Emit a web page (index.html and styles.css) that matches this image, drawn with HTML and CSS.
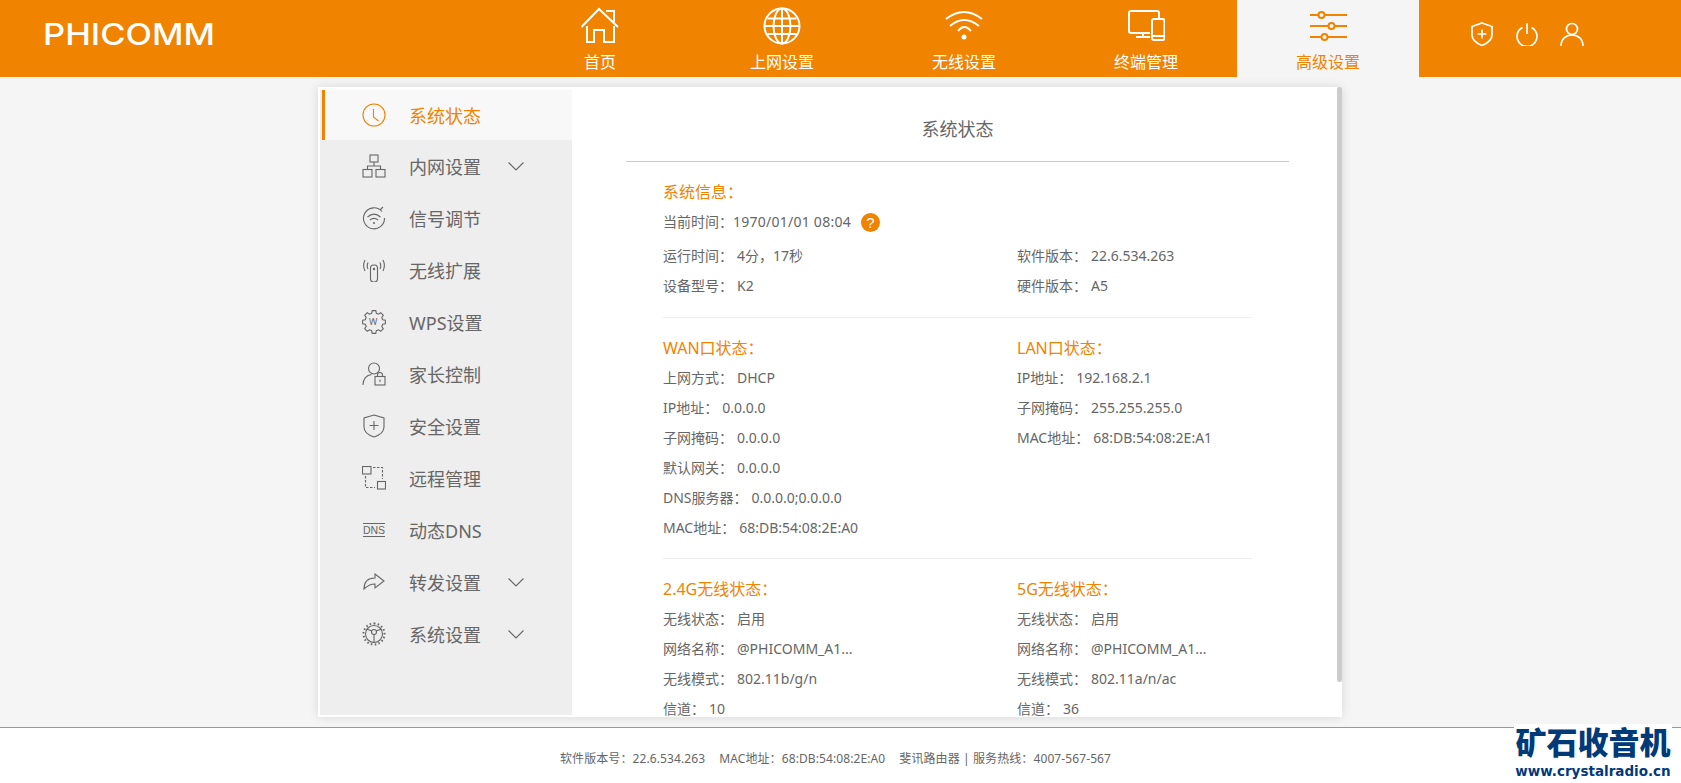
FILE: index.html
```html
<!DOCTYPE html>
<html lang="zh-CN">
<head>
    <meta charset="UTF-8">
    <title>PHICOMM</title>
    <link rel="stylesheet" href="styles.css">
</head>
<body>
    <!-- Cabecera -->
    <header class="top">
        <div class="logo"><span>PHICOMM</span></div>
        <nav class="nav">
            <a class="nav-item">
                <svg class="nav-icon" viewBox="0 0 38 38"><path d="M.5 20 18 2l19 18M33 15V4h-8M6 19v16h7V23h10v12h10V19"/></svg>
                <span>首页</span>
            </a>
            <a class="nav-item">
                <svg class="nav-icon" viewBox="0 0 38 38"><circle cx="19" cy="19" r="17.500"/><ellipse cx="19" cy="19" rx="8.500" ry="17.500"/><path d="M19 1.500v35M1.500 19h35M4.500 11.500h29M4.500 27h29"/></svg>
                <span>上网设置</span>
            </a>
            <a class="nav-item">
                <svg class="nav-icon" viewBox="0 0 38 38"><path d="M1 12Q19-2 37 12M5 19Q19 7 34 19M13 24Q19 16 26 24"/><circle class="dot" cx="19" cy="30" r="2.500"/></svg>
                <span>无线设置</span>
            </a>
            <a class="nav-item">
                <svg class="nav-icon" viewBox="0 0 38 38"><path d="M32 11V6a2 2 0 0 0-2-2H4a2 2 0 0 0-2 2v18a2 2 0 0 0 2 2h19M16 26v4M9 30h14"/><rect x="25" y="12" width="12.500" height="21" rx="2"/><path d="M25 29h12.500"/></svg>
                <span>终端管理</span>
            </a>
            <a class="nav-item active">
                <svg class="nav-icon" viewBox="0 0 38 38"><path d="M1 8h8M16 8h22M1 19h18M26 19h12M1 30h11M19 30h19"/><circle cx="12.500" cy="8" r="3"/><circle cx="22.500" cy="19" r="3"/><circle cx="15.500" cy="30" r="3"/></svg>
                <span>高级设置</span>
            </a>
        </nav>
        <div class="tools">
            <svg viewBox="0 0 24 24"><path d="M12 1 22 4.500V13c0 4-4 8-10 10.500C6 21 2 17 2 13V4.500zM12 7.500v9M7.500 12h9"/></svg>
            <svg viewBox="0 0 24 24"><path d="M7.500 5.500a10 10 0 1 0 9 0M12 1v11"/></svg>
            <svg viewBox="0 0 24 24"><circle cx="12" cy="7" r="5.500"/><path d="M1 24c0-7 5-11 11-11s11 4 11 11"/></svg>
        </div>
    </header>

    <main class="main">
        <div class="panel">
            <!-- Menu lateral -->
            <aside class="side">
                <a class="side-item active">
                    <svg viewBox="0 0 24 24"><circle cx="12" cy="12" r="11"/><path d="M11.500 6v8l5 4"/></svg>
                    <span>系统状态</span>
                </a>
                <a class="side-item">
                    <svg viewBox="0 0 24 24"><rect x="8" y="1" width="8" height="7"/><rect x="1" y="15.500" width="9" height="7.500"/><rect x="14" y="15.500" width="9" height="7.500"/><path d="M12 8v4M5.500 15.500V12h13v3.500"/></svg>
                    <span>内网设置</span>
                    <svg class="arrow" viewBox="0 0 16 9"><path d="M.5.5 8 8 15.500.5"/></svg>
                </a>
                <a class="side-item">
                    <svg viewBox="0 0 24 24"><path d="M20 5.500A10.500 10.500 0 1 0 22.500 12M18 4l3-3"/><path d="M5.500 11c4-3.500 9-3.500 13 0M8 14c2.500-2 5.500-2 8 0"/><circle class="dot" cx="12" cy="17" r="1"/></svg>
                    <span>信号调节</span>
                </a>
                <a class="side-item">
                    <svg viewBox="0 0 24 24"><rect x="8.500" y="7" width="7" height="17" rx="3"/><circle class="dot" cx="12" cy="11" r="1.200"/><path d="M3 13C1 9 1 6 3 2M21 13c2-4 2-7 0-11M6 11c-1-2-1-4 0-6.500M18 11c1-2 1-4 0-6.500"/></svg>
                    <span>无线扩展</span>
                </a>
                <a class="side-item">
                    <svg viewBox="0 0 24 24"><path d="M14.330 3.310 13.800.64h-3.600l-.53 2.670-2.170.9-2.260-1.510-2.540 2.540L4.210 7.500l-.9 2.170-2.670.53v3.600l2.670.53.9 2.170-1.510 2.260 2.540 2.540 2.260-1.510 2.170.9.530 2.670h3.600l.53-2.670 2.170-.9 2.260 1.510 2.540-2.540-1.510-2.260.9-2.170 2.670-.53v-3.600l-2.670-.53-.9-2.170 1.510-2.260-2.540-2.540-2.260 1.510z"/></svg>
                    <span>WPS设置</span>
                    <b class="wps-mark">W</b>
                </a>
                <a class="side-item">
                    <svg viewBox="0 0 24 24"><circle cx="12" cy="6.500" r="5.500"/><path d="M1 23c0-6 3.500-10 8.500-10.500"/><rect x="13" y="14.500" width="10" height="8.500"/><path d="M15.500 14.500V13a2.500 2.500 0 0 1 5 0v1.500M18 17.500v2.500"/></svg>
                    <span>家长控制</span>
                </a>
                <a class="side-item">
                    <svg viewBox="0 0 24 24"><path d="M12 1 22 4v9c0 4-4 8-10 10C6 21 2 17 2 13V4zM12 7v9M7.500 11.500h9"/></svg>
                    <span>安全设置</span>
                </a>
                <a class="side-item">
                    <svg viewBox="0 0 24 24"><rect x=".5" y=".5" width="8.500" height="7.500"/><rect x="15.500" y="15.500" width="8" height="7.500"/><path stroke-dasharray="2.500 1.500" d="M11 1.500h9.500V13M3.500 10v11.500H13"/></svg>
                    <span>远程管理</span>
                </a>
                <a class="side-item">
                    <svg viewBox="0 0 24 24"><path d="M1 5.500h22M1 18.500h22"/><text x="12" y="15.800" text-anchor="middle">DNS</text></svg>
                    <span>动态DNS</span>
                </a>
                <a class="side-item">
                    <svg viewBox="0 0 24 24"><path d="M13 4 22 11l-9 7v-4C8 14 5 16 2 19 2 12 6 8 13 8z"/></svg>
                    <span>转发设置</span>
                    <svg class="arrow" viewBox="0 0 16 9"><path d="M.5.5 8 8 15.500.5"/></svg>
                </a>
                <a class="side-item">
                    <svg viewBox="0 0 24 24"><circle cx="12" cy="12" r="8.500"/><circle cx="12" cy="10" r="2.500"/><path d="M12 12.500V20M9.800 9 4.500 7M14.200 9l5.300-2"/><path stroke-dasharray="1.500 2.300" stroke-width="2" d="M12 1.500a10.500 10.500 0 1 1-.01 0z"/></svg>
                    <span>系统设置</span>
                    <svg class="arrow" viewBox="0 0 16 9"><path d="M.5.5 8 8 15.500.5"/></svg>
                </a>
            </aside>

            <!-- Contenido -->
            <section class="content">
                <h3 class="page-title">系统状态</h3>
                <div class="block first">
                    <h4 class="orange">系统信息：</h4>
                    <p class="now">当前时间：<span class="date">1970/01/01 08:04</span><i class="help">?</i></p>
                    <div class="cols">
                        <div class="col">
                            <p class="row">运行时间：<span>4分，17秒</span></p>
                            <p class="row">设备型号：<span>K2</span></p>
                        </div>
                        <div class="col">
                            <p class="row">软件版本：<span>22.6.534.263</span></p>
                            <p class="row">硬件版本：<span>A5</span></p>
                        </div>
                    </div>
                </div>
                <div class="block">
                    <div class="cols">
                        <div class="col">
                            <h4 class="orange">WAN口状态：</h4>
                            <p class="row">上网方式：<span>DHCP</span></p>
                            <p class="row">IP地址：<span>0.0.0.0</span></p>
                            <p class="row">子网掩码：<span>0.0.0.0</span></p>
                            <p class="row">默认网关：<span>0.0.0.0</span></p>
                            <p class="row">DNS服务器：<span>0.0.0.0;0.0.0.0</span></p>
                            <p class="row">MAC地址：<span>68:DB:54:08:2E:A0</span></p>
                        </div>
                        <div class="col">
                            <h4 class="orange">LAN口状态：</h4>
                            <p class="row">IP地址：<span>192.168.2.1</span></p>
                            <p class="row">子网掩码：<span>255.255.255.0</span></p>
                            <p class="row">MAC地址：<span>68:DB:54:08:2E:A1</span></p>
                        </div>
                    </div>
                </div>
                <div class="block last">
                    <div class="cols">
                        <div class="col">
                            <h4 class="orange">2.4G无线状态：</h4>
                            <p class="row">无线状态：<span>启用</span></p>
                            <p class="row">网络名称：<span>@PHICOMM_A1...</span></p>
                            <p class="row">无线模式：<span>802.11b/g/n</span></p>
                            <p class="row">信道：<span>10</span></p>
                        </div>
                        <div class="col">
                            <h4 class="orange">5G无线状态：</h4>
                            <p class="row">无线状态：<span>启用</span></p>
                            <p class="row">网络名称：<span>@PHICOMM_A1...</span></p>
                            <p class="row">无线模式：<span>802.11a/n/ac</span></p>
                            <p class="row">信道：<span>36</span></p>
                        </div>
                    </div>
                </div>
            </section>
            <div class="scroll-thumb"></div>
        </div>
    </main>

    <footer class="foot">
        <span>软件版本号：22.6.534.263</span>
        <span>MAC地址：68:DB:54:08:2E:A0</span>
        <span>斐讯路由器 | 服务热线：4007-567-567</span>
    </footer>

    <!-- Marca de agua -->
    <div class="mark">
        <div class="mark-cn">矿石收音机</div>
        <div class="mark-en">www.crystalradio.cn</div>
    </div>
</body>
</html>
```

FILE: styles.css
```css
* {
    box-sizing: border-box;
}

html, body {
    height: 100%;
    margin: 0;
    overflow: hidden;
}

body {
    font-family: "Noto Sans", "Noto Sans CJK SC", sans-serif;
    font-size: 14px;
    color: #666;
    background-color: #f5f5f5;
    display: flex;
    flex-direction: column;
    position: relative;
}

svg {
    fill: none;
    stroke: currentColor;
    stroke-width: 1.2;
}

svg .dot {
    fill: currentColor;
    stroke: none;
}

/* Cabecera */
.top {
    height: 77px;
    flex: none;
    display: flex;
    background-color: #f08300;
    color: #fff;
}

.logo {
    width: 509px;
    padding: 17px 0 0 43px;
}

.logo span {
    display: block;
    font-family: "Inter", sans-serif;
    font-size: 30px;
    line-height: 34px;
    font-weight: 500;
    transform: scaleX(1.15);
    transform-origin: left center;
}

.nav {
    display: flex;
}

.nav-item {
    width: 182px;
    height: 77px;
    padding-top: 7px;
    display: flex;
    flex-direction: column;
    align-items: center;
    font-size: 16px;
    line-height: 20px;
}

.nav-icon {
    width: 38px;
    height: 38px;
    margin-bottom: 7px;
    stroke-width: 2;
}

.nav-item.active {
    background-color: #f5f5f5;
    color: #f08300;
}

.tools {
    display: flex;
    gap: 21px;
    padding: 22px 0 0 51px;
}

.tools svg {
    width: 24px;
    height: 24px;
    stroke-width: 1.7;
}

/* Panel principal */
.main {
    flex: 1;
    min-height: 0;
    padding: 10px 0 0 318px;
}

.panel {
    width: 1024px;
    height: 630px;
    background-color: #fff;
    box-shadow: 0 0 10px rgba(0, 0, 0, 0.12);
    display: flex;
    position: relative;
}

.side {
    width: 252px;
    flex: none;
    margin: 3px 0 2px 2px;
    background-color: #eee;
}

.side-item {
    height: 52px;
    display: flex;
    align-items: center;
    padding-left: 42px;
    font-size: 18px;
    color: #666;
    position: relative;
}

.side-item svg {
    width: 24px;
    height: 24px;
    flex: none;
    margin-right: 23px;
    stroke-width: 1.1;
}

.side-item svg text {
    font-family: "Liberation Sans", sans-serif;
    font-size: 10.5px;
    fill: currentColor;
    stroke: none;
}

.side-item .arrow {
    width: 16px;
    height: 9px;
    margin: 0 0 0 27px;
}

.side-item.active {
    height: 50px;
    margin-left: 2px;
    background-color: #f8f8f8;
    color: #f08300;
    border-left: 3px solid #f08300;
    padding-left: 37px;
}

.wps-mark {
    position: absolute;
    left: 49px;
    top: 20px;
    font-size: 9px;
    line-height: 12px;
    font-weight: 400;
}

/* Contenido */
.content {
    flex: 1;
    min-width: 0;
    height: 630px;
    padding: 0 53px 0 54px;
    overflow: hidden;
}

.scroll-thumb {
    position: absolute;
    top: 0;
    right: 0;
    width: 5px;
    height: 595px;
    background-color: #ccc;
    border-radius: 2px;
}

.page-title {
    margin: 0;
    height: 75px;
    padding-top: 29px;
    font-size: 18px;
    line-height: 26px;
    font-weight: 400;
    text-align: center;
    border-bottom: 1px solid #ccc;
}

.block {
    margin: 0 37px;
    padding: 15px 0;
    border-bottom: 1px solid #eee;
}

.block.first {
    padding-bottom: 16px;
}

.block.last {
    border-bottom: none;
}

.orange {
    margin: 0;
    font-size: 16px;
    line-height: 30px;
    font-weight: 400;
    color: #f08300;
}

.cols {
    display: grid;
    grid-template-columns: 354px 1fr;
}

.now {
    margin: 0 0 4px;
    height: 30px;
    line-height: 30px;
    display: flex;
    align-items: center;
}

.date {
    letter-spacing: 0.25px;
}

.help {
    width: 19px;
    height: 19px;
    margin-left: 10px;
    border-radius: 50%;
    background-color: #f08300;
    color: #fff;
    font-family: "Liberation Sans", sans-serif;
    font-style: normal;
    font-size: 15px;
    line-height: 19px;
    text-align: center;
}

.row {
    margin: 0;
    height: 30px;
    line-height: 30px;
    white-space: nowrap;
}

.row span {
    margin-left: 4px;
}

/* Pie */
.foot {
    height: 56px;
    flex: none;
    border-top: 1px solid #e8891c;
    background-color: #fff;
    display: flex;
    justify-content: center;
    gap: 14px;
    padding: 22px 10px 0 0;
    font-size: 12px;
    line-height: 18px;
    letter-spacing: 0.1px;
}

.mark {
    position: absolute;
    left: 1514px;
    top: 724px;
    width: 158px;
    background-color: #fff;
    color: #003a78;
    text-align: center;
}

.mark-cn {
    font-family: "Noto Sans CJK SC", sans-serif;
    font-size: 31px;
    line-height: 33px;
    font-weight: 900;
}

.mark-en {
    font-family: "DejaVu Sans", sans-serif;
    font-size: 13.500px;
    line-height: 20px;
    font-weight: 700;
    margin-top: 4px;
    white-space: nowrap;
}
```
